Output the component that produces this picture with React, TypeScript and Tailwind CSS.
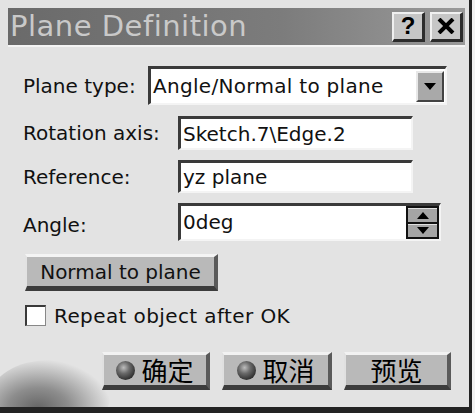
const sans = { fontFamily: '"DejaVu Sans", Verdana, sans-serif' };

const Sunken = ({ className, children }: { className: string; children?: React.ReactNode }) => (
  <div
    className={`flex items-center bg-white border-t-[3px] border-l-[3px] border-b-[2px] border-r-[2px] border-t-[#3a3a3a] border-l-[#3a3a3a] border-b-[#f4f4f4] border-r-[#f4f4f4] ${className}`}
  >
    {children}
  </div>
);

const Ball = () => (
  <span className="inline-block w-[19px] h-[19px] rounded-full bg-[radial-gradient(circle_at_40%_35%,#bdbdbd_0%,#6a6a6a_35%,#2e2e2e_75%,#555_100%)] mr-[6px]" />
);

const BigButton = ({ label, ball, w }: { label: string; ball?: boolean; w: string }) => (
  <div
    className={`flex items-center justify-center h-[38px] ${w} bg-[#b9b9b9] border-t-[3px] border-l-[2px] border-t-[#f2f2f2] border-l-[#e0e0e0] border-b-[5px] border-r-[4px] border-b-[#3c3c3c] border-r-[#5a5a5a] text-[26px] text-black`}
    style={{ fontFamily: '"Noto Sans CJK SC", "DejaVu Sans", sans-serif' }}
  >
    {ball && <Ball />}
    <span className="leading-none">{label}</span>
  </div>
);

const App = () => {
  return (
    <div className="w-[475px] h-[413px] bg-[#f2f2f2] pr-[3px]" style={sans}>
      <div className="w-full h-full border-r-[3px] border-b-[6px] border-[#232323] pl-[8px] pt-[8px] pr-[4px] flex flex-col relative overflow-hidden bg-[#e3e3e3]">
        {/* swirl in the corner */}
        <div className="absolute left-[-10px] bottom-[-28px] w-[120px] h-[75px] rounded-[50%] bg-[radial-gradient(ellipse_at_40%_65%,#3a3a3a_0%,#707070_30%,#b5b5b5_55%,transparent_72%)] opacity-75" />

        {/* title bar */}
        <div className="h-[37px] flex items-center bg-[linear-gradient(90deg,#6a6a6a,#7c7c7c_60%,#9a9a9a)] pl-[2px] pr-[2px] relative">
          <span className="text-[29px] text-[#c9c9c9] leading-none tracking-[0.5px]">Plane Definition</span>
          <div className="ml-auto flex gap-[5px]">
            <div className="w-[33px] h-[30px] flex items-center justify-center bg-[#c6c6c6] border-t-[2px] border-l-[2px] border-[#f0f0f0] border-b-[3px] border-r-[3px] border-b-[#2c2c2c] border-r-[#2c2c2c] text-[24px] font-bold leading-none" style={{ fontFamily: '"Liberation Sans", sans-serif' }}>?</div>
            <div className="w-[33px] h-[30px] flex items-center justify-center bg-[#c6c6c6] border-t-[2px] border-l-[2px] border-[#f0f0f0] border-b-[3px] border-r-[3px] border-b-[#2c2c2c] border-r-[#2c2c2c]">
              <svg width="18" height="16" viewBox="0 0 18 16">
                <path d="M2 1 L16 15 M16 1 L2 15" stroke="#000" strokeWidth="4" />
              </svg>
            </div>
          </div>
        </div>
        <div className="h-[2px] bg-[#f4f4f4]" />

        <div className="flex flex-col pl-[15px] text-[20px] text-[#111] relative">
          {/* plane type */}
          <div className="flex items-center mt-[19px] h-[39px]">
            <span className="w-[125px]">Plane type:</span>
            <Sunken className="w-[299px] h-[39px] pl-[2px]">
              <span className="tracking-[0.3px]">Angle/Normal to plane</span>
              <div className="ml-auto mr-[1px] w-[28px] h-[31px] flex items-center justify-center bg-[#a9a9a9] border-t-[2px] border-l-[2px] border-[#e8e8e8] border-b-[2px] border-r-[2px] border-b-[#444] border-r-[#444]">
                <svg width="12" height="7" viewBox="0 0 12 7"><path d="M0 0 H12 L6 7 Z" fill="#000" /></svg>
              </div>
            </Sunken>
          </div>

          <div className="flex items-center mt-[11px] h-[34px]">
            <span className="w-[155px]">Rotation axis:</span>
            <Sunken className="w-[235px] h-[34px] pl-[2px]">
              <span>Sketch.7\Edge.2</span>
            </Sunken>
          </div>

          <div className="flex items-center mt-[10px] h-[33px]">
            <span className="w-[155px]">Reference:</span>
            <Sunken className="w-[235px] h-[33px] pl-[2px]">
              <span>yz plane</span>
            </Sunken>
          </div>

          <div className="flex mt-[10px] h-[38px]">
            <span className="w-[155px] self-end mb-[1px]">Angle:</span>
            <Sunken className="w-[263px] h-[38px] pl-[2px] items-stretch">
              <span className="self-start mt-[1px]">0deg</span>
              <div className="ml-auto w-[33px] flex flex-col bg-[#111] p-[2px] gap-[2px]">
                <div className="flex-1 flex items-center justify-center bg-[#a5a5a5] border-t border-[#e0e0e0]">
                  <svg width="12" height="7" viewBox="0 0 12 7"><path d="M0 7 H12 L6 0 Z" fill="#000" /></svg>
                </div>
                <div className="flex-1 flex items-center justify-center bg-[#a5a5a5] border-t border-[#e0e0e0]">
                  <svg width="12" height="7" viewBox="0 0 12 7"><path d="M0 0 H12 L6 7 Z" fill="#000" /></svg>
                </div>
              </div>
            </Sunken>
          </div>

          <div className="mt-[13px] ml-[2px] w-[193px] h-[37px] flex items-center justify-center bg-[#b9b9b9] border-t-[3px] border-l-[2px] border-t-[#f4f4f4] border-l-[#e2e2e2] border-b-[5px] border-r-[4px] border-b-[#3c3c3c] border-r-[#5a5a5a]">
            Normal to plane
          </div>

          <div className="flex items-center mt-[14px] ml-[2px] h-[21px]">
            <div className="w-[21px] h-[21px] bg-white border-t-[2px] border-l-[2px] border-[#3a3a3a] border-b border-r border-b-[#888] border-r-[#888]" />
            <span className="ml-[8px] tracking-[0.4px]">Repeat object after OK</span>
          </div>

          <div className="flex mt-[26px] gap-[12px] ml-[79px]">
            <BigButton label="确定" ball w="w-[108px]" />
            <BigButton label="取消" ball w="w-[110px]" />
            <BigButton label="预览" w="w-[107px]" />
          </div>
        </div>
      </div>
    </div>
  );
};

export default App;
